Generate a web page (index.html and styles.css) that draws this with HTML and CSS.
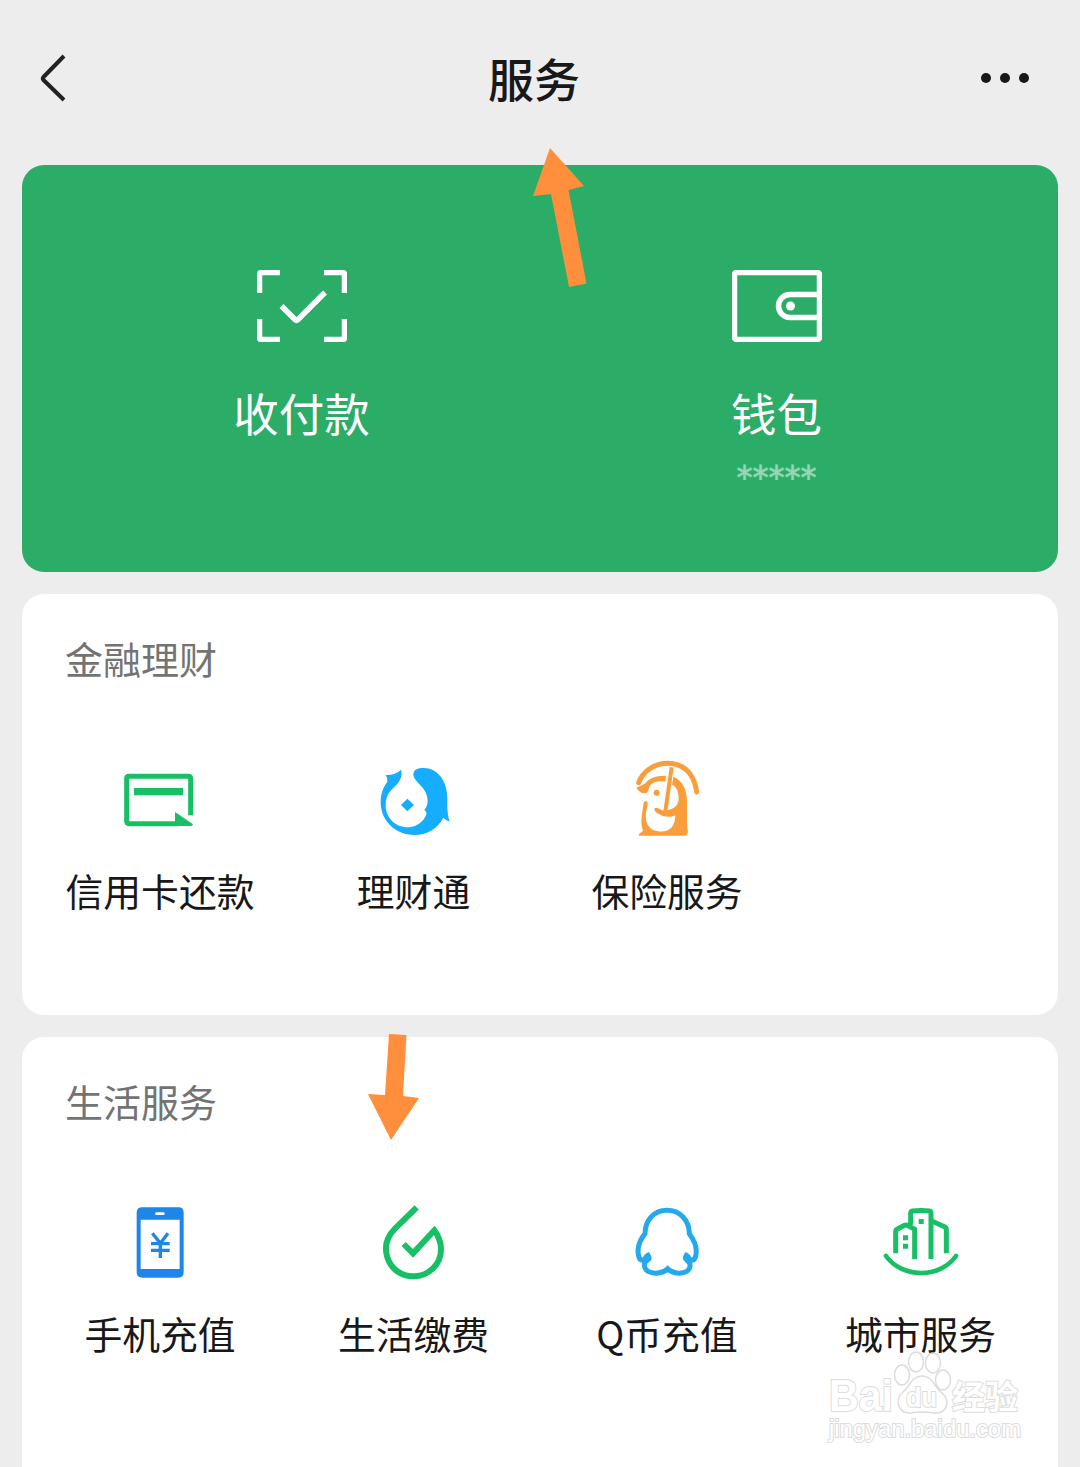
FILE: index.html
```
<!DOCTYPE html>
<html lang="zh-CN">
<head>
  <meta charset="UTF-8" />
  <meta name="viewport" content="width=device-width, initial-scale=1.0"/>
  <title>服务</title>
  <link rel="stylesheet" href="styles.css">
</head>
<body>
  <header class="topbar">
    <svg class="back" viewBox="0 0 30 50"><path d="M26 3L5.500 24Q4 25.500 5.500 27L26 47" /></svg>
    <h1 class="title">服务</h1>
    <svg class="more" viewBox="0 0 50 12"><circle cx="6" cy="6" r="5" /><circle cx="25" cy="6" r="5" /><circle cx="44" cy="6" r="5" /></svg>
  </header>

  <main class="cards">
    <section class="card pay">
      <div class="pay-item">
        <svg class="pay-icon" viewBox="0 0 90 72">
          <path d="M2.500 23V4.500Q2.500 2.500 4.500 2.500H23M67 2.500H85.500Q87.500 2.500 87.500 4.500V23M87.500 49V67.500Q87.500 69.500 85.500 69.500H67M23 69.500H4.500Q2.500 69.500 2.500 67.500V49M24.500 36L38 49.500Q39.500 51 41 49.500L68 22.500" />
        </svg>
        <span class="pay-label">收付款</span>
      </div>
      <div class="pay-item">
        <svg class="pay-icon" viewBox="0 0 90 72">
          <rect x="2.500" y="2.500" width="85" height="67" rx="2" />
          <path d="M87 24.500H58A11.500 11.500 0 0 0 58 47.500H87" />
          <circle class="dot" cx="58.500" cy="36" r="4.500" />
        </svg>
        <span class="pay-label">钱包</span>
        <span class="balance">*****</span>
      </div>
    </section>

    <section class="card finance">
      <h2 class="card-title">金融理财</h2>
      <div class="grid">
        <div class="item">
          <svg class="icon green" viewBox="0 0 300 300">
            <path class="line" d="M242 196V86Q242 79 235 79H57Q50 79 50 86V214Q50 221 57 221H200" />
            <path d="M72 114H219V136H72ZM195 228V186L249 223Q248 228 242 228Z" />
          </svg>
          <span class="label">信用卡还款</span>
        </div>
        <div class="item">
          <svg class="icon sky" viewBox="-2 0 300 300">
            <path d="M63 75Q90 77 109 59Q116 78 98 102C82 119 63 130 63 166C63 205 94 232 128 232C160 232 187 207 187 180L180 178Q188 170 189 152C189 111 145 96 146 72C147 58 160 54 177 54C218 54 248 92 248 145C248 170 247 189 255 215Q245 212 236 203C220 235 186 255 149 255C91 255 48 211 48 157C48 128 57 110 68 96Q70 84 63 75Z" />
            <path d="M128 146L148 165L128 184L109 165Z" />
            <path d="M179 178L194 175L186 190Z" />
          </svg>
          <span class="label">理财通</span>
        </div>
        <div class="item">
          <svg class="icon orange" viewBox="6 0 300 300">
            <path class="thick" d="M71 98C96 31 190 20 226 73Q241 94 245 126" />
            <path class="thin" d="M170 52L149 198" />
            <path d="M64 113Q80 107 91 100C101 85 123 76 153 77L151 95C122 91 104 100 101 118C99 129 93 131 83 129Q72 126 64 113Z" />
            <circle cx="125" cy="128" r="9" />
            <path d="M175 80C202 91 216 118 216 154V210Q216 238 219 243Q218 257 208 257H72V252L84 242C79 230 78 213 81 192L86 158Q91 149 98 157Q99 164 95 178C88 209 95 239 128 244C163 249 181 230 181 196C169 202 156 201 145 198C130 192 119 187 118 177Q122 170 132 176Q145 184 156 181C176 178 191 166 191 147C191 123 184 109 171 104Z" />
          </svg>
          <span class="label">保险服务</span>
        </div>
      </div>
    </section>

    <section class="card life">
      <h2 class="card-title">生活服务</h2>
      <div class="grid">
        <div class="item">
          <svg class="icon blue" viewBox="-15 0 300 300">
            <path fill-rule="evenodd" d="M82 52H190Q206 52 206 68V247Q206 263 190 263H82Q65 263 65 247V68Q65 52 82 52ZM77 89V237H194V89ZM122 67Q119 71 122 75H147Q151 71 147 67Z" />
            <path class="yen" d="M112 130L136 160L159 130M108 161H164M108 181H164M136 160V204" />
          </svg>
          <span class="label">手机充值</span>
        </div>
        <div class="item">
          <svg class="icon green" viewBox="-17 0 300 300">
            <path class="drop" d="M141 52L76 116C53 139 43 169 53 202C64 237 95 259 131 259C178 259 214 223 214 178Q214 147 194 121L130 190L102 162" />
          </svg>
          <span class="label">生活缴费</span>
        </div>
        <div class="item">
          <svg class="icon azure" viewBox="-9 0 300 300">
            <path class="penguin" d="M141 61C102 61 75 91 75 131C59 151 51 170 55 193C57 210 66 215 76 205Q78 199 84 196C91 207 87 208 79 213C69 221 72 236 84 244C100 253 128 251 143 236C158 251 184 253 200 244C212 236 214 221 203 213C196 208 192 207 199 196Q205 199 207 205C217 215 226 210 228 193C232 170 223 151 208 131C208 91 180 61 141 61Z" />
          </svg>
          <span class="label">Q币充值</span>
        </div>
        <div class="item">
          <svg class="icon green" viewBox="0 0 300 300">
            <path class="city" d="M74 190V124Q74 120 78 118L101 106Q105 104 109 106L131 118V208M119 104V70Q119 64 125 63Q150 60 175 63Q180 64 180 70V207M184 94L222 111Q226 113 226 118V190" />
            <path class="smile" d="M45 198C93 265 206 267 255 198" />
            <path d="M143 87H158V102H143ZM96 136H111V151H96ZM96 161H111V176H96Z" />
          </svg>
          <span class="label">城市服务</span>
        </div>
      </div>
    </section>
  </main>

  <!-- pointers over the page -->
  <svg class="arrow arrow-up" viewBox="0 0 54 142"><path d="M17 0L51 38L35.500 42L53.500 135.500L36 139L18 46L0 48Z" /></svg>
  <svg class="arrow arrow-down" viewBox="0 0 52 106"><path d="M21 0L38.500 1L35 62L51 64L23 106L0 60L17 61Z" /></svg>

  <div class="watermark">
    <svg viewBox="0 0 220 150">
      <text class="mark-bai" x="14" y="101" textLength="64" lengthAdjust="spacingAndGlyphs">Bai</text>
      <ellipse cx="87" cy="65" rx="7.500" ry="10" />
      <ellipse cx="101" cy="52" rx="7.500" ry="10" />
      <ellipse cx="118" cy="53" rx="7.500" ry="10" />
      <ellipse cx="128" cy="70" rx="7.500" ry="10" />
      <path d="M107 66C97 66 95 76 88 82C79 89 83 104 96 103Q107 101 119 103C132 104 136 91 127 83C119 77 118 66 107 66Z" />
      <text class="mark-du" x="91" y="97" textLength="31" lengthAdjust="spacingAndGlyphs">du</text>
      <text class="mark-cn" x="137" y="99">经验</text>
      <text class="mark-url" x="14" y="127" textLength="192" lengthAdjust="spacingAndGlyphs">jingyan.baidu.com</text>
    </svg>
  </div>
</body>
</html>
```
FILE: styles.css
```
* {
  box-sizing: border-box;
}
body {
  position: relative;
  margin: 0;
  height: 1467px;
  overflow: hidden;
  background: #ededed;
  color: #181818;
  font-family: "Noto Sans CJK SC", sans-serif;
}
svg {
  display: block;
}
.topbar {
  display: grid;
  grid-template-columns: 100px 1fr 112px;
  align-items: center;
  height: 165px;
  padding: 0 0 9px;
}
.back {
  width: 30px;
  height: 50px;
  margin-left: 38px;
  fill: none;
  stroke: #222;
  stroke-width: 4;
}
.title {
  margin: 0 0 3px;
  font-size: 46px;
  font-weight: 500;
  line-height: 60px;
  text-align: center;
}
.more {
  width: 50px;
  height: 12px;
  margin-left: 12px;
  fill: #181818;
}
.cards {
  display: flex;
  flex-direction: column;
  gap: 22px;
  padding: 0 22px;
}
.card {
  border-radius: 22px;
  background: #fff;
}
.pay {
  display: flex;
  justify-content: space-between;
  height: 407px;
  padding: 105px 44px 0 42px;
  background: #2bad67;
  color: #fff;
}
.pay-item {
  display: flex;
  flex-direction: column;
  align-items: center;
  width: 475px;
}
.pay-icon {
  width: 90px;
  height: 72px;
  fill: none;
  stroke: #fff;
  stroke-width: 5.500;
}
.pay-icon .dot {
  fill: #fff;
  stroke: none;
}
.pay-label {
  margin-top: 37px;
  font-size: 45.500px;
  line-height: 66px;
}
.balance {
  margin-top: 12px;
  color: #95d6b3;
  font-family: "DejaVu Sans", sans-serif;
  font-size: 32px;
  line-height: 40px;
  -webkit-text-stroke: 0.800px #95d6b3;
}
.finance {
  height: 421px;
}
.life {
  height: 460px;
}
.card-title {
  margin: 0;
  padding: 39px 43px 0;
  color: #737373;
  font-size: 38px;
  font-weight: 400;
  line-height: 50px;
}
.grid {
  display: grid;
  grid-template-columns: 254px 253px 254px 253px;
  padding: 67px 11px 0;
}
.life .grid {
  padding-top: 64px;
}
.item {
  display: flex;
  flex-direction: column;
  align-items: center;
}
.icon {
  width: 100px;
  height: 100px;
}
.label {
  margin-top: 15px;
  font-size: 37.800px;
  line-height: 50px;
  white-space: nowrap;
}
.life .label {
  margin-top: 18px;
}
.green { fill: #17bf65; stroke: #17bf65; }
.sky { fill: #16adff; }
.orange { fill: #fa9d3b; stroke: #fa9d3b; }
.blue { fill: #1e85e9; stroke: #1e85e9; }
.azure { stroke: #25a9ed; }
.icon path,
.icon circle {
  stroke-width: 0;
}
.icon .line,
.icon .thick,
.icon .thin,
.icon .yen,
.icon .drop,
.icon .penguin,
.icon .city,
.icon .smile {
  fill: none;
  stroke-width: 15;
}
.icon .thick {
  stroke-linecap: round;
}
.icon .thin {
  stroke-width: 12;
}
.icon .yen {
  stroke-width: 10;
}
.icon .drop {
  stroke-width: 18;
}
.icon .smile {
  stroke-linecap: round;
  stroke-width: 14;
}
.arrow {
  position: absolute;
  fill: #ff8f3c;
}
.arrow-up {
  left: 533px;
  top: 148px;
  width: 54px;
  height: 142px;
}
.arrow-down {
  left: 368px;
  top: 1034px;
  width: 52px;
  height: 106px;
}
.watermark {
  position: absolute;
  left: 815px;
  top: 1310px;
  width: 220px;
  height: 150px;
  fill: #fff;
  stroke: #dcdcdc;
  stroke-width: 1.500;
}
.watermark text {
  font-family: "Liberation Sans", "Noto Sans CJK SC", sans-serif;
  paint-order: stroke;
  stroke-width: 2;
}
.mark-bai {
  font-size: 44px;
  font-weight: 700;
}
.mark-du {
  font-size: 27px;
  font-weight: 700;
}
.mark-cn {
  font-size: 33px;
  font-weight: 700;
}
.mark-url {
  font-size: 23px;
}
```
